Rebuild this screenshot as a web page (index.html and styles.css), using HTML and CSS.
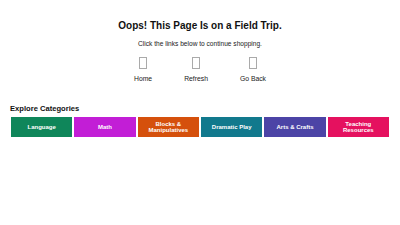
FILE: index.html
```html
<!DOCTYPE html>
<html>
<head>
<meta charset="utf-8">
<link rel="stylesheet" href="styles.css">
</head>
<body>
<main class="page">
  <section class="oops">
    <h1 class="title">Oops! This Page Is on a Field Trip.</h1>
    <p class="sub">Click the links below to continue shopping.</p>
    <nav class="links">
      <a class="link" href="#"><span class="icon"></span><span class="label">Home</span></a>
      <a class="link" href="#"><span class="icon"></span><span class="label">Refresh</span></a>
      <a class="link" href="#"><span class="icon"></span><span class="label">Go Back</span></a>
    </nav>
  </section>
  <section class="explore">
    <h2 class="explore-title">Explore Categories</h2>
    <div class="tiles">
      <a class="tile t-lang" href="#">Language</a>
      <a class="tile t-math" href="#">Math</a>
      <a class="tile t-blocks" href="#">Blocks &amp;<br>Manipulatives</a>
      <a class="tile t-drama" href="#">Dramatic Play</a>
      <a class="tile t-arts" href="#">Arts &amp; Crafts</a>
      <a class="tile t-teach" href="#">Teaching<br>Resources</a>
    </div>
  </section>
</main>
</body>
</html>
```
FILE: styles.css
```css
* { box-sizing: border-box; }
html, body { margin: 0; padding: 0; background: #fff; }
body { font-family: "Liberation Sans", Arial, sans-serif; color: #111; }
.page { width: 400px; height: 225px; }
.oops { display: flex; flex-direction: column; align-items: center; padding-top: 20px; }
.title { margin: 0; font-size: 10px; font-weight: bold; line-height: 12px; color: #111; }
.sub { margin: 6.5px 0 0; font-size: 6.6px; line-height: 9px; color: #222; }
.links { display: flex; gap: 32px; margin-top: 8.5px; }
.link { display: flex; flex-direction: column; align-items: center; text-decoration: none; color: #222; }
.icon { width: 8px; height: 12px; border: 1px solid #aaa; margin-top: 1px; }
.label { font-size: 6.8px; line-height: 9px; margin-top: 4.5px; }
.explore { padding: 21.5px 10px 0; }
.explore-title { margin: 0 0 3px; font-size: 7.6px; line-height: 10px; font-weight: bold; color: #111; }
.tiles { display: flex; }
.tile { flex: 1 1 0; margin: 0 1px; height: 20px; display: flex; align-items: center; justify-content: center; text-align: center; color: #fff; font-size: 6px; line-height: 6.5px; font-weight: bold; text-decoration: none; }
.t-lang { background: #0f865a; }
.t-math { background: #c21ed6; }
.t-blocks { background: #d5500c; }
.t-drama { background: #11798d; }
.t-arts { background: #4c44a6; }
.t-teach { background: #e5115f; }
```
